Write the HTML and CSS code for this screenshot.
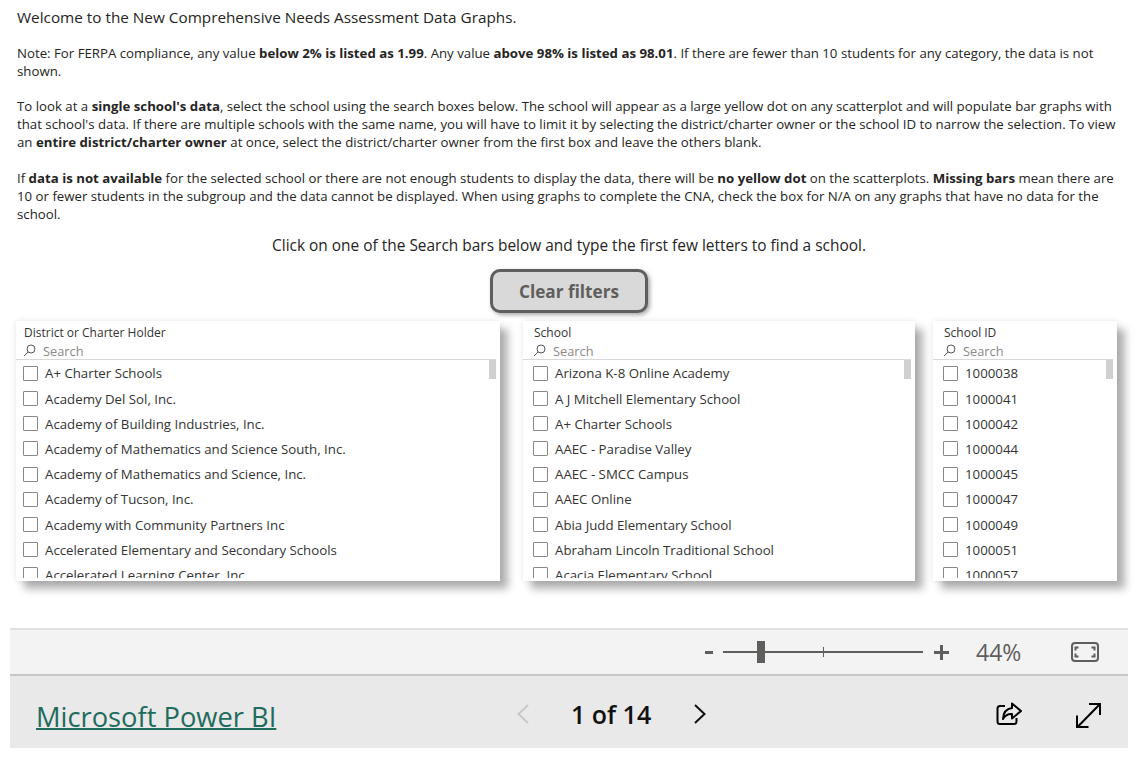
FILE: index.html
```html
<!DOCTYPE html>
<html lang="en">
<head>
    <meta charset="UTF-8">
    <meta name="viewport" content="width=device-width, initial-scale=1.0">
    <title>Comprehensive Needs Assessment Data Graphs</title>
    <link rel="stylesheet" href="styles.css">
</head>
<body>
    <div id="report">
        <div class="intro">
            <p class="welcome">Welcome to the New Comprehensive Needs Assessment Data Graphs.</p>
            <p>Note: For FERPA compliance, any value <b>below 2% is listed as 1.99</b>. Any value <b>above 98% is listed as 98.01</b>. If there are fewer than 10 students for any category, the data is not<br>shown.</p>
            <p>To look at a <b>single school's data</b>, select the school using the search boxes below. The school will appear as a large yellow dot on any scatterplot and will populate bar graphs with<br>that school's data. If there are multiple schools with the same name, you will have to limit it by selecting the district/charter owner or the school ID to narrow the selection. To view<br>an <b>entire district/charter owner</b> at once, select the district/charter owner from the first box and leave the others blank.</p>
            <p>If <b>data is not available</b> for the selected school or there are not enough students to display the data, there will be <b>no yellow dot</b> on the scatterplots. <b>Missing bars</b> mean there are<br>10 or fewer students in the subgroup and the data cannot be displayed. When using graphs to complete the CNA, check the box for N/A on any graphs that have no data for the<br>school.</p>
        </div>
        <p class="hint">Click on one of the Search bars below and type the first few letters to find a school.</p>
        <div class="clear-row"><button class="clear-btn">Clear filters</button></div>

        <div class="slicers">
            <div class="slicer slicer-district">
                <div class="slicer-title">District or Charter Holder</div>
                <div class="slicer-search">
                    <svg class="search-icon" viewBox="0 0 13 13"><circle cx="8" cy="5" r="4" fill="none" stroke="#555" stroke-width="1"/><path d="M5.2 7.8 L1 12" stroke="#555" stroke-width="1" fill="none"/></svg>
                    <span>Search</span>
                </div>
                <div class="slicer-list">
                    <div class="scroll-thumb"></div>
                    <div class="item"><i></i>A+ Charter Schools</div>
                    <div class="item"><i></i>Academy Del Sol, Inc.</div>
                    <div class="item"><i></i>Academy of Building Industries, Inc.</div>
                    <div class="item"><i></i>Academy of Mathematics and Science South, Inc.</div>
                    <div class="item"><i></i>Academy of Mathematics and Science, Inc.</div>
                    <div class="item"><i></i>Academy of Tucson, Inc.</div>
                    <div class="item"><i></i>Academy with Community Partners Inc</div>
                    <div class="item"><i></i>Accelerated Elementary and Secondary Schools</div>
                    <div class="item"><i></i>Accelerated Learning Center, Inc.</div>
                </div>
            </div>
            <div class="slicer slicer-school">
                <div class="slicer-title">School</div>
                <div class="slicer-search">
                    <svg class="search-icon" viewBox="0 0 13 13"><circle cx="8" cy="5" r="4" fill="none" stroke="#555" stroke-width="1"/><path d="M5.2 7.8 L1 12" stroke="#555" stroke-width="1" fill="none"/></svg>
                    <span>Search</span>
                </div>
                <div class="slicer-list">
                    <div class="scroll-thumb"></div>
                    <div class="item"><i></i>Arizona K-8 Online Academy</div>
                    <div class="item"><i></i>A J Mitchell Elementary School</div>
                    <div class="item"><i></i>A+ Charter Schools</div>
                    <div class="item"><i></i>AAEC - Paradise Valley</div>
                    <div class="item"><i></i>AAEC - SMCC Campus</div>
                    <div class="item"><i></i>AAEC Online</div>
                    <div class="item"><i></i>Abia Judd Elementary School</div>
                    <div class="item"><i></i>Abraham Lincoln Traditional School</div>
                    <div class="item"><i></i>Acacia Elementary School</div>
                </div>
            </div>
            <div class="slicer slicer-id">
                <div class="slicer-title">School ID</div>
                <div class="slicer-search">
                    <svg class="search-icon" viewBox="0 0 13 13"><circle cx="8" cy="5" r="4" fill="none" stroke="#555" stroke-width="1"/><path d="M5.2 7.8 L1 12" stroke="#555" stroke-width="1" fill="none"/></svg>
                    <span>Search</span>
                </div>
                <div class="slicer-list">
                    <div class="scroll-thumb"></div>
                    <div class="item"><i></i>1000038</div>
                    <div class="item"><i></i>1000041</div>
                    <div class="item"><i></i>1000042</div>
                    <div class="item"><i></i>1000044</div>
                    <div class="item"><i></i>1000045</div>
                    <div class="item"><i></i>1000047</div>
                    <div class="item"><i></i>1000049</div>
                    <div class="item"><i></i>1000051</div>
                    <div class="item"><i></i>1000057</div>
                </div>
            </div>
        </div>
    </div>

    <div id="footer">
        <div class="zoom-bar">
            <span class="zoom-minus"></span>
            <div class="zoom-slider">
                <span class="zoom-tick"></span>
                <span class="zoom-thumb"></span>
            </div>
            <svg class="zoom-plus" viewBox="0 0 15 15"><path d="M7.5 0 V15 M0 7.5 H15" stroke="#605e5c" stroke-width="3"/></svg>
            <span class="zoom-value">44%</span>
            <svg class="fit-icon" viewBox="0 0 28 20"><rect x="1" y="1" width="26" height="18" rx="3" fill="none" stroke="#605e5c" stroke-width="2"/><path d="M7.5 5.5 H4.5 V8.5 M20.5 5.5 H23.5 V8.5 M7.5 14.5 H4.5 V11.5 M20.5 14.5 H23.5 V11.5" fill="none" stroke="#605e5c" stroke-width="2"/></svg>
        </div>
        <div class="nav-bar">
            <a class="brand" href="#">Microsoft Power BI</a>
            <div class="pager">
                <svg class="chevron" viewBox="0 0 12 20"><path d="M11 1 L1.5 10 L11 19" fill="none" stroke="#c8c8c8" stroke-width="2"/></svg>
                <span class="page-count">1 of 14</span>
                <svg class="chevron" viewBox="0 0 12 20"><path d="M1 1 L10.5 10 L1 19" fill="none" stroke="#111" stroke-width="2"/></svg>
            </div>
            <div class="nav-actions">
                <svg class="share-icon" viewBox="0 0 26 24"><path d="M9 4 H4 Q1.5 4 1.5 6.5 V19.5 Q1.5 22 4 22 H18 Q20.5 22 20.5 19.5 V16" fill="none" stroke="#000" stroke-width="2"/><path d="M16 1.5 L25 9 L16 16.5 V12 Q10 11.5 7 17 Q7.5 7 16 6 Z" fill="none" stroke="#000" stroke-width="2" stroke-linejoin="round"/></svg>
                <svg class="expand-icon" viewBox="0 0 25 25"><path d="M1.5 24 L24 1 M13 1 H24 V12 M1 12.5 V24 H12.5" fill="none" stroke="#000" stroke-width="2"/></svg>
            </div>
        </div>
    </div>
</body>
</html>
```

FILE: styles.css
```css
body {
    margin: 0;
    background: #fff;
    font-family: "Open Sans", "Noto Sans", Arial, sans-serif;
    color: #252423;
}
#report {
    height: 628px;
    overflow: hidden;
}
.intro {
    padding: 8px 0 0 17px;
    font-size: 13.24px;
    line-height: 18px;
}
.intro p {
    margin: 0 0 17.6px 0;
    white-space: nowrap;
}
.intro .welcome {
    font-size: 15.3px;
    line-height: 18px;
    margin-bottom: 17.5px;
}
.hint {
    margin: -5.3px 0 0 0;
    text-align: center;
    font-size: 15.45px;
    line-height: 20px;
    padding-left: 2px;
}
.clear-row {
    display: flex;
    justify-content: center;
    margin-top: 14px;
    padding-left: 2px;
}
.clear-btn {
    width: 158px;
    height: 44px;
    padding: 1px 0 0 0;
    border: 3px solid #605e5c;
    border-radius: 10px;
    background: #d9d9d9;
    color: #605e5c;
    font-family: inherit;
    font-size: 17.2px;
    font-weight: 700;
    box-shadow: 2px 2px 4px rgba(0, 0, 0, 0.35);
}
.slicers {
    display: flex;
    margin-top: 8px;
    padding-left: 16px;
    gap: 23px;
}
.slicer {
    --pad: 8px;
    height: 260px;
    background: #fff;
    box-shadow: 8px 8px 8px rgba(0, 0, 0, 0.3), 0 0 6px rgba(0, 0, 0, 0.1);
    display: flex;
    flex-direction: column;
}
.slicer-district { width: 484px; }
.slicer-school { width: 392px; --pad: 11px; }
.slicer-id { width: 184px; margin-left: -5px; --pad: 11px; }
.slicer-title {
    padding: 4px 0 0 var(--pad);
    font-size: 12px;
    line-height: 15px;
    font-weight: 500;
    color: #333;
}
.slicer-search {
    display: flex;
    align-items: center;
    gap: 7px;
    height: 16px;
    margin: 0 4px 0 0;
    padding: 3px 0 0 var(--pad);
    border-bottom: 1px solid #d8d8d8;
    color: #8a8886;
    font-size: 12.8px;
}
.search-icon {
    width: 13px;
    height: 13px;
    margin-left: -1px;
}
.slicer-list {
    position: relative;
    flex: 1;
    overflow: hidden;
    margin-bottom: 3px;
    padding-top: 0.8px;
}
.scroll-thumb {
    position: absolute;
    top: 0;
    right: 4px;
    width: 7px;
    height: 19px;
    background: #d0d0d0;
}
.item {
    display: flex;
    align-items: center;
    height: 25.2px;
    padding-left: calc(var(--pad) - 1px);
    font-size: 13.25px;
    white-space: nowrap;
    color: #333;
}
.item i {
    flex: none;
    width: 13px;
    height: 13px;
    margin-right: 7px;
    border: 1px solid #8a8886;
    border-radius: 1px;
}
#footer {
    margin: 0 8px 0 10px;
}
.zoom-bar {
    display: flex;
    align-items: center;
    height: 44px;
    background: #f3f3f3;
    border-top: 2px solid #e1e1e1;
}
.zoom-minus {
    width: 8px;
    height: 3px;
    margin-left: 695px;
    background: #605e5c;
}
.zoom-slider {
    position: relative;
    width: 200px;
    height: 2px;
    margin-left: 10px;
    background: #605e5c;
}
.zoom-thumb {
    position: absolute;
    left: 34px;
    top: -10px;
    width: 8px;
    height: 22px;
    background: #605e5c;
}
.zoom-tick {
    position: absolute;
    left: 100px;
    top: -4px;
    width: 1px;
    height: 10px;
    background: #605e5c;
}
.zoom-plus {
    width: 15px;
    height: 15px;
    margin-left: 11px;
}
.zoom-value {
    margin-left: 27px;
    font-size: 23px;
    color: #605e5c;
}
.fit-icon {
    width: 28px;
    height: 20px;
    margin-left: 50px;
}
.nav-bar {
    position: relative;
    display: flex;
    align-items: center;
    height: 72px;
    background: #e9e9e9;
    border-top: 2px solid #c8c8c8;
}
.brand {
    margin: 8px 0 0 26px;
    font-size: 27.3px;
    color: #1f6b5c;
    text-decoration-thickness: 2px;
}
.pager {
    display: flex;
    align-items: center;
    position: absolute;
    left: 507px;
    top: 0;
    height: 76px;
}
.chevron {
    width: 12px;
    height: 20px;
}
.page-count {
    margin: 0 43px 0 42px;
    font-size: 25px;
    font-weight: 600;
    color: #111;
    white-space: nowrap;
}
.nav-actions {
    position: absolute;
    left: 986px;
    top: 26px;
    display: flex;
    gap: 54px;
}
.share-icon {
    width: 26px;
    height: 24px;
}
.expand-icon {
    width: 25px;
    height: 25px;
    margin-top: 1px;
}
```
